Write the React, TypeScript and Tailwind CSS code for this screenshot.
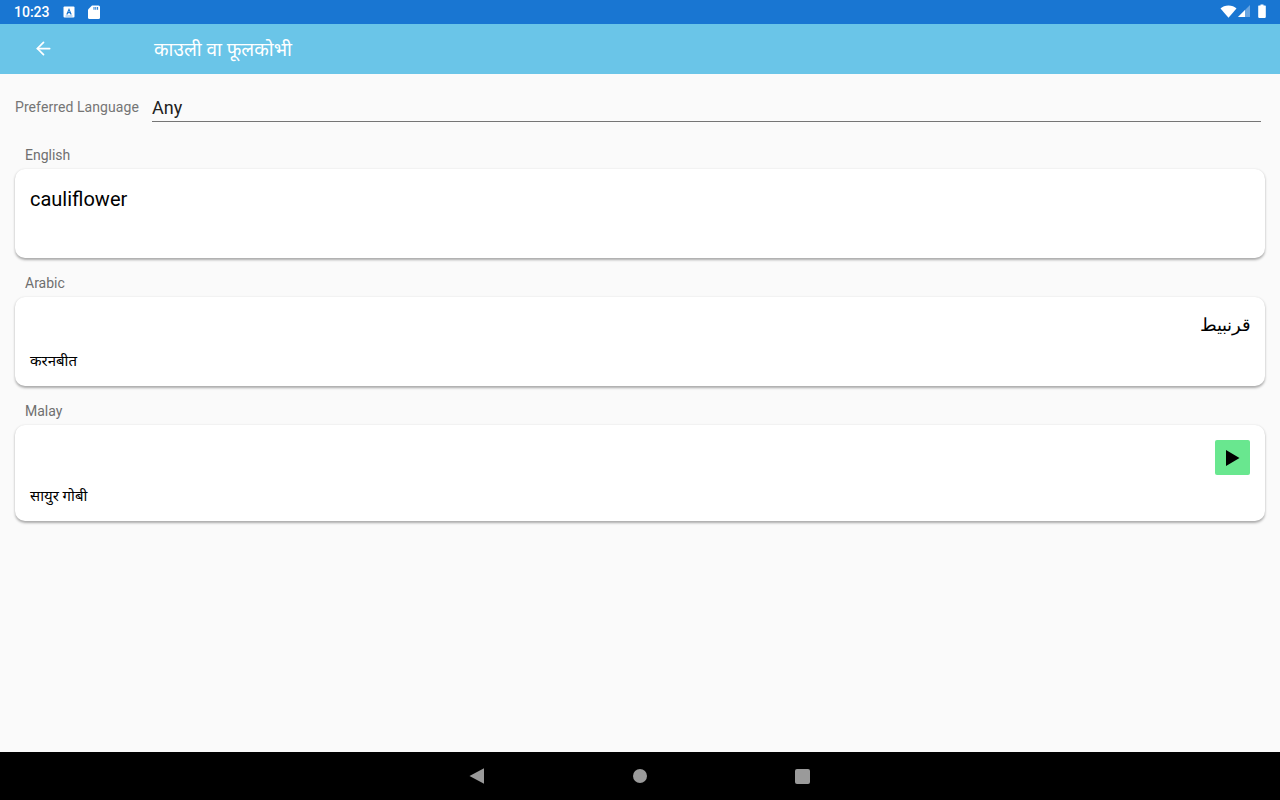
import { ArrowLeft } from 'lucide-react'

const font = '[font-family:Roboto,"Noto_Sans",sans-serif]'
const card = 'rounded-[10px] bg-white px-[15px] shadow-[0_1.5px_2.5px_rgba(0,0,0,0.32)]'

function StatusBar() {
  return (
    <div className="flex h-6 shrink-0 items-center bg-[#1976d2] pl-[14px] pr-[14px] text-white">
      <span className="text-[14px] font-medium leading-none">10:23</span>
      <svg className="ml-[13px]" width="12" height="12" viewBox="0 0 12 12">
        <rect x="0.500" y="0.500" width="11" height="11" rx="1" fill="#fff" />
        <path d="M6 2 3.200 8.500h1.500l.4-1.200h1.800l.4 1.200h1.500L6 2zM5.500 6.100 6 4.600l.5 1.500h-1z" fill="#1976d2" />
        <rect x="2.500" y="9.500" width="7" height="1" fill="#7fb2e5" />
      </svg>
      <svg className="ml-[12px]" width="14" height="16" viewBox="0 0 14 16">
        <path d="M5 1.500h6.500a1.500 1.500 0 0 1 1.500 1.500v10.500a1.500 1.500 0 0 1-1.500 1.500h-9A1.500 1.500 0 0 1 1 13.500V5.500z" fill="#fff" />
        <path d="M6.500 3h1v2.800h-1zM8.300 3h1v2.800h-1zM10.100 3h1v2.800h-1z" fill="#1976d2" />
      </svg>
      <div className="ml-auto flex items-center">
        <svg className="mb-[2px]" width="17" height="13" viewBox="0 0 17 13">
          <path d="M0.500 3.500C2.500 1.500 5.200.4 8.500.4s6 1.100 8 3.100L8.500 12.800z" fill="#fff" />
        </svg>
        <svg className="mb-[2px]" width="14" height="14" viewBox="0 0 14 14">
          <path d="M13 1v12H1z" fill="#fff" fillOpacity="0.35" />
          <path d="M8 6v7H1z" fill="#fff" />
        </svg>
        <svg className="mb-[2px] ml-[7px]" width="8" height="14" viewBox="0 0 8 14">
          <path d="M2.500 0.500h3v1h1.700a.6.600 0 0 1 .6.600v11a.8.800 0 0 1-.8.800H1a.8.800 0 0 1-.8-.8v-11a.6.600 0 0 1 .6-.6h1.700z" fill="#fff" />
        </svg>
      </div>
    </div>
  )
}

function Label({ children }: { children: string }) {
  return <div className="h-[28px] pl-[10px] pt-[5px] text-[14px] leading-[18px] text-[#6f6f6f]">{children}</div>
}

export default function App() {
  return (
    <div className={`flex h-[800px] w-[1280px] flex-col overflow-hidden bg-[#fafafa] ${font}`}>
      <StatusBar />

      <header className="flex h-[50px] shrink-0 items-center bg-[#6ac5e8] text-white">
        <div className="flex w-[154px] shrink-0 pl-[33px]">
          <ArrowLeft size={21} strokeWidth={2} className="-mt-[1px]" />
        </div>
        <span className="text-[19px] leading-none">काउली वा फूलकोभी</span>
      </header>

      <main className="flex-1 px-[15px]">
        <div className="flex h-[48px] items-end">
          <span className="w-[137px] shrink-0 pb-[5px] text-[14px] leading-[20px] tracking-[0.08px] text-[#757575]">Preferred Language</span>
          <div className="mr-[4px] h-[34px] flex-1 border-b border-[#757575] pt-[3px] text-[18px] leading-[34px] text-[#212121]">Any</div>
        </div>

        <div className="mt-[19px]"><Label>English</Label></div>
        <section className={`h-[89px] pt-[17px] ${card}`}>
          <p className="text-[20px] leading-[26px] text-black">cauliflower</p>
        </section>

        <div className="mt-[11px]"><Label>Arabic</Label></div>
        <section className={`flex h-[89px] flex-col pt-[14px] ${card}`}>
          <p dir="rtl" className="-mr-[1px] text-[18px] leading-[28px] text-black">قرنبيط</p>
          <p className="mt-[12px] text-[15px] leading-[20px] text-black">करनबीत</p>
        </section>

        <div className="mt-[11px]"><Label>Malay</Label></div>
        <section className={`flex h-[96px] flex-col pt-[15px] ${card}`}>
          <div className="flex justify-end">
            <button className="flex h-[35px] w-[35px] items-center justify-center rounded-[2px] bg-[#69e78f]">
              <svg width="14" height="16" viewBox="0 0 14 16">
                <path d="M0 0v16L13.500 8z" fill="#000" />
              </svg>
            </button>
          </div>
          <p className="mt-[11px] text-[15px] leading-[20px] text-black">सायुर गोबी</p>
        </section>
      </main>

      <nav className="flex h-[48px] shrink-0 items-center bg-black pl-[469px]">
        <svg width="16" height="16" viewBox="0 0 16 16">
          <path d="M15 .3v15.400L.5 8z" fill="#9a9a9a" />
        </svg>
        <div className="ml-[148px] h-[14px] w-[14px] rounded-full bg-[#9a9a9a]" />
        <div className="ml-[148px] h-[15px] w-[15px] rounded-[2px] bg-[#9a9a9a]" />
      </nav>
    </div>
  )
}
